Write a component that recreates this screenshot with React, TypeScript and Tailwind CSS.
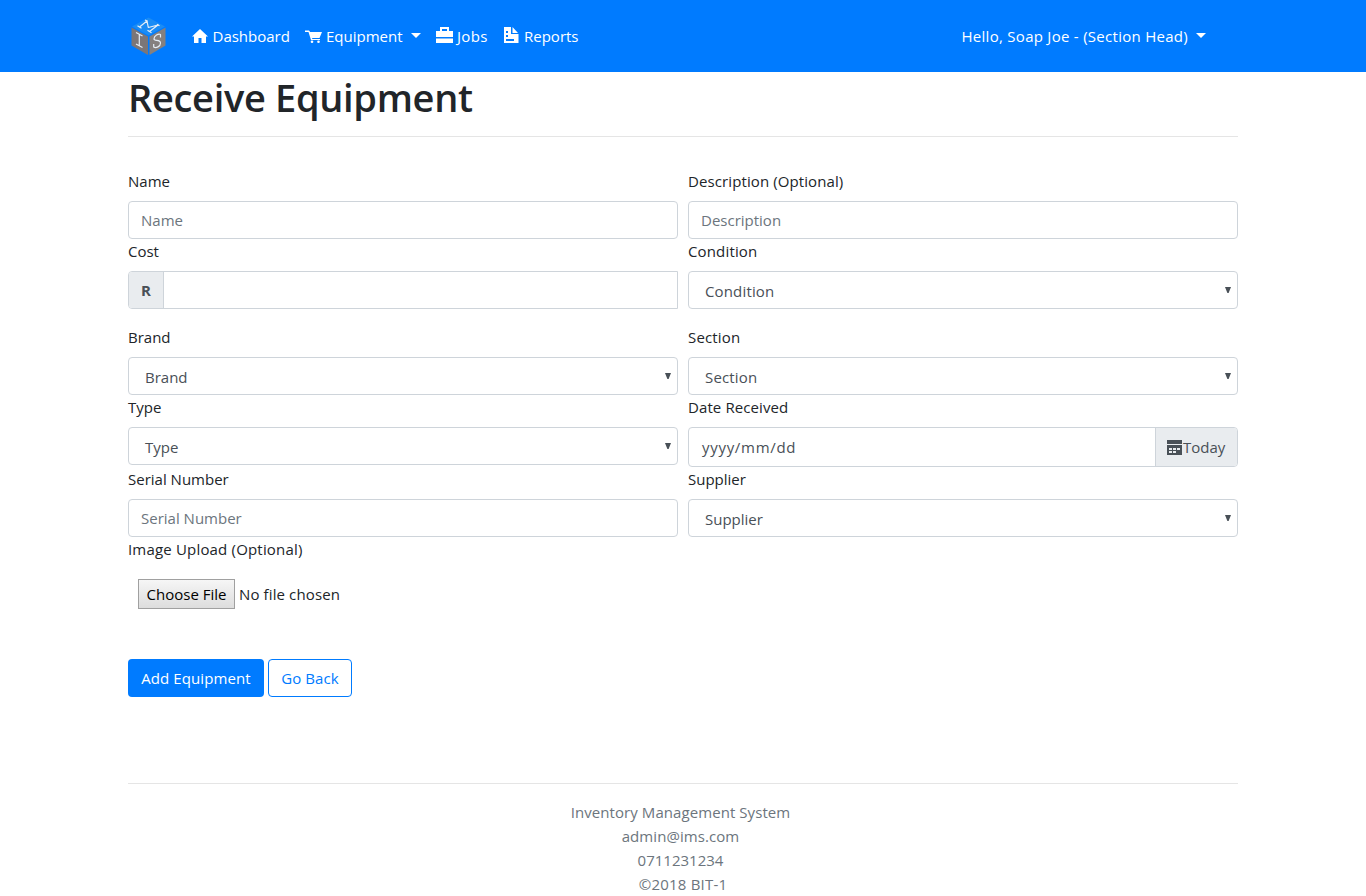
import React from 'react';

const control = 'h-[38px] w-full rounded-[4px] border border-[#ced4da] bg-white';

function Label({ children, track = '' }: { children: React.ReactNode; track?: string }) {
  return (
    <div className="mb-2 flex h-6 items-center text-[#212529]">
      <span className={`whitespace-nowrap ${track}`}>{children}</span>
    </div>
  );
}

function TextField({ text }: { text: string }) {
  return (
    <div className={`${control} flex items-center px-3 text-[#6c757d]`}>
      <span>{text}</span>
    </div>
  );
}

function SelectField({ text, track = '' }: { text: string; track?: string }) {
  return (
    <div className={`${control} flex items-center justify-between pl-4 pr-1.5 text-[#495057]`}>
      <span className={`pt-0.5 ${track}`}>{text}</span>
      <svg width="6" height="6" viewBox="0 0 6 6"><path d="M0 0h6L3.600 6H2.400z" fill="#495057" /></svg>
    </div>
  );
}

function Caret() {
  return <svg width="10" height="5" viewBox="0 0 10 5" className="mb-0.5"><path d="M0 0h10L5 5z" fill="#fff" /></svg>;
}

function Logo() {
  return (
    <svg width="36" height="39" viewBox="0 0 36 39">
      <path d="M17.500 0.500L34 9.500 17.500 18.500 1 9.500z" fill="#1a8cf5" />
      <path d="M0.500 10.500l16.500 9v18.500L0.500 28.500z" fill="#7b7678" />
      <path d="M34.500 10.500l-16 9v18.500l16-9.500z" fill="#85807f" />
      <g fill="none" stroke="#e6eef7" strokeWidth="1.200" strokeLinejoin="round">
        <path d="M8.500 10L16 4l1.300 6.500L27 8l-8.500 6.500" />
        <path d="M6.500 8.800l4 2.400M14 3l2.500 1.300M16.500 13.300l4 2.400M26 7.400l2.500 1.300" />
        <path d="M5 15.500l6.500 3.500M8.300 17.300v11.500M5 27l6.500 3.500" />
        <path d="M29.500 20.500v-3c-2-1-6.500 1-6.500 4.500 0 2.500 6.500 0 6.500 4 0 3.500-4.500 5.500-6.800 4v-3" />
      </g>
    </svg>
  );
}

export default function App() {
  return (
    <div className="h-[896px] w-full overflow-hidden bg-white text-[15px] leading-6 text-[#212529] font-['Open_Sans','Noto_Sans',sans-serif]">
      <nav className="h-[72px] bg-[#007bff] text-white">
        <div className="mx-auto flex h-full w-[1110px] items-center">
          <div className="ml-[3px] w-[61px]"><Logo /></div>
          <a className="flex w-[113px] items-center gap-[4.5px]">
            <svg width="16" height="14" viewBox="0 0 16 14"><path d="M8 0l8 7.500h-2V14H9.500V9h-3v5H2V7.500H0z" fill="#fff" /></svg>
            <span>Dashboard</span>
          </a>
          <a className="flex w-[131px] items-center gap-1">
            <svg width="17" height="13" viewBox="0 0 17 13"><path d="M0 0.500h4l1.200 1.500H17l-2.500 6H7l.4 1H15v1H6L3.500 2H0z" fill="#fff" /><circle cx="7" cy="11.700" r="1.300" fill="#fff" /><circle cx="13.500" cy="11.700" r="1.300" fill="#fff" /></svg>
            <span>Equipment</span>
            <span className="ml-1"><Caret /></span>
          </a>
          <a className="flex w-[68px] items-center gap-1">
            <svg width="17" height="16" viewBox="0 0 17 16" className="mb-0.5"><path fillRule="evenodd" d="M4 4V0h9v4h4v6H0V4zM6 4h5V2H6zM0 11.500h17V16H0z" fill="#fff" /></svg>
            <span className="tracking-[0.3px]">Jobs</span>
          </a>
          <a className="flex items-center gap-1.5">
            <svg width="15" height="16" viewBox="0 0 15 16" className="mb-0.5"><path fillRule="evenodd" d="M0 0h7v7h7.500v9H0zM2 4v2h2V4zM2 8v2h2V8zM2 12v2h8v-2zM8.500 0l5.500 6H8.500z" fill="#fff" /></svg>
            <span className="-ml-px">Reports</span>
          </a>
          <a className="ml-auto mr-8 flex items-center gap-2">
            <span className="tracking-[0.28px]">Hello, Soap Joe - (Section Head)</span>
            <Caret />
          </a>
        </div>
      </nav>

      <main className="mx-auto w-[1110px]">
        <h1 className="box-content flex h-16 items-start whitespace-nowrap border-b border-[#e5e5e5] text-[38px] font-semibold leading-[51px]">
          <span className="tracking-[-0.32px]">Receive Equipment</span>
        </h1>

        <form className="mt-8 grid grid-cols-2 gap-x-2.5">
          <div>
            <Label>Name</Label>
            <TextField text="Name" />
            <Label>Cost</Label>
            <div className="mb-4 flex h-[38px] rounded-l-[4px] border border-[#ced4da]">
              <span className="flex w-[35px] items-center justify-center rounded-l-[3px] border-r border-[#ced4da] bg-[#e9ecef] font-bold text-[#495057]">R</span>
            </div>
            <Label>Brand</Label>
            <SelectField text="Brand" />
            <Label>Type</Label>
            <SelectField text="Type" />
            <div className="h-0.5" />
            <Label>Serial Number</Label>
            <TextField text="Serial Number" />
            <Label track="tracking-[0.18px]">Image Upload (Optional)</Label>
            <div className="ml-2.5 mt-[18px] flex h-[30px] items-center gap-1">
              <button type="button" className="flex h-[30px] w-[97px] items-center justify-center whitespace-nowrap border border-[#a0a0a0] bg-linear-to-b from-[#f6f6f6] to-[#dddddd] text-black">Choose File</button>
              <span className="tracking-[0.12px]">No file chosen</span>
            </div>
          </div>
          <div>
            <Label track="tracking-[0.1px]">Description (Optional)</Label>
            <TextField text="Description" />
            <Label track="tracking-[0.15px]">Condition</Label>
            <SelectField text="Condition" track="tracking-[0.15px]" />
            <div className="h-4" />
            <Label track="tracking-[0.15px]">Section</Label>
            <SelectField text="Section" track="tracking-[0.15px]" />
            <Label track="tracking-[0.1px]">Date Received</Label>
            <div className="flex h-10 overflow-hidden rounded-[4px] border border-[#ced4da] text-[#495057]">
              <span className="flex flex-1 items-center pl-[13px] tracking-[0.7px]">yyyy/mm/dd</span>
              <span className="flex w-[82px] items-center gap-px border-l border-[#ced4da] bg-[#e9ecef] pl-[11px]">
                <svg width="15" height="15" viewBox="0 0 15 15"><path fillRule="evenodd" d="M0 0h15v4H0zM0 5h15v10H0zM2 8v2h3V8zM6 8v2h3V8zM10 8v2h3V8zM2 11v2h3v-2zM6 11v2h3v-2z" fill="#495057" /></svg>
                <span>Today</span>
              </span>
            </div>
            <Label>Supplier</Label>
            <SelectField text="Supplier" />
          </div>
        </form>

        <div className="mt-[50px] flex gap-1">
          <button type="button" className="flex h-[38px] w-[136px] items-center justify-center whitespace-nowrap rounded-[4px] bg-[#007bff] text-white"><span className="tracking-[0.1px]">Add Equipment</span></button>
          <button type="button" className="flex h-[38px] w-[84px] items-center justify-center whitespace-nowrap rounded-[4px] border border-[#007bff] text-[#007bff]"><span className="tracking-[0.1px]">Go Back</span></button>
        </div>

        <footer className="mt-[86px] border-t border-[#e5e5e5] pr-[5px] pt-4 text-center text-[#6c757d]">
          <p className="tracking-[0.07px]">Inventory Management System</p>
          <p className="tracking-[0.07px]">admin@ims.com</p>
          <p>0711231234</p>
          <p className="pl-[5px] tracking-[0.2px]">©2018 BIT-1</p>
        </footer>
      </main>
    </div>
  );
}
